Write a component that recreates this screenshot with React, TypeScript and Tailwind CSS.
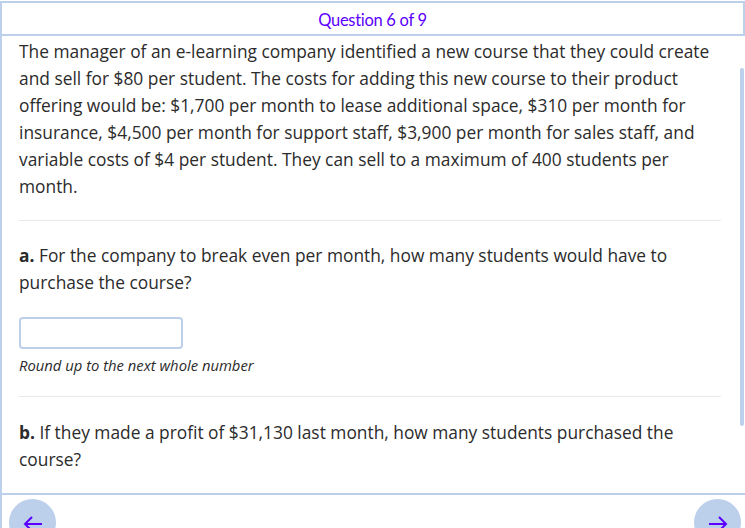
import React from "react";

/* ===================== ARROWS ===================== */
function Arrow({ dir }: { dir: "left" | "right" }) {
  return (
    <svg width="20" height="18" viewBox="0 0 20 18" fill="none" className="mt-[3px]">
      {dir === "left" ? (
        <path d="M19 9H2M9 2L2 9l7 7" stroke="#5b00ff" strokeWidth="2" />
      ) : (
        <path d="M1 9h17M11 2l7 7-7 7" stroke="#5b00ff" strokeWidth="2" />
      )}
    </svg>
  );
}

/* ===================== COMPONENT ===================== */
export default function App() {
  return (
    <div
      className="relative w-[745px] h-[528px] overflow-hidden bg-white text-[#2b2b2b]"
      style={{ fontFamily: '"Open Sans", sans-serif' }}
    >
      {/* HEADER */}
      <div className="mt-px h-[35px] border-y-2 border-x-2 border-[#bcd0ec] flex items-center justify-center pt-[3px]">
        <span
          className="text-[16.5px] tracking-[-0.3px] text-[#5b00ff]"
          style={{ fontFamily: "Lato, sans-serif" }}
        >
          Question 6 of 9
        </span>
      </div>

      {/* BODY */}
      <div className="h-[457px] border-l-2 border-[#bcd0ec] pl-[17px] pt-[2px]">
        <p className="text-[17.35px] leading-[27px] w-[718px] whitespace-nowrap">
          The manager of an e-learning company identified a new course that they could create
          <br />
          and sell for $80 per student. The costs for adding this new course to their product
          <br />
          offering would be: $1,700 per month to lease additional space, $310 per month for
          <br />
          insurance, $4,500 per month for support staff, $3,900 per month for sales staff, and
          <br />
          variable costs of $4 per student. They can sell to a maximum of 400 students per
          <br />
          month.
        </p>

        <div className="mt-[20px] h-px w-[702px] bg-[#e8eaee]" />

        <p className="mt-[21px] text-[17.35px] leading-[27px] whitespace-nowrap">
          <span className="font-bold">a.</span> For the company to break even per month, how
          many students would have to
          <br />
          purchase the course?
        </p>

        <div className="mt-[21px] w-[164px] h-[32px] rounded-[4px] border-2 border-[#bcd0ec]" />

        <p className="mt-[6px] text-[14.8px] leading-[20px] italic">
          Round up to the next whole number
        </p>

        <div className="mt-[21px] h-px w-[702px] bg-[#e8eaee]" />

        <p className="mt-[22px] text-[17.35px] leading-[27px] whitespace-nowrap">
          <span className="font-bold">b.</span> If they made a profit of $31,130 last month,
          how many students purchased the
          <br />
          course?
        </p>
      </div>

      {/* FOOTER */}
      <div className="border-t-2 border-l-2 border-[#bcd0ec] h-[40px] flex justify-between pl-[7px] pr-[4px] pt-[4px]">
        <div className="w-[47px] h-[47px] rounded-full bg-[#bcd0ec] flex items-center justify-center">
          <Arrow dir="left" />
        </div>
        <div className="w-[47px] h-[47px] rounded-full bg-[#bcd0ec] flex items-center justify-center">
          <Arrow dir="right" />
        </div>
      </div>

      {/* SCROLLBAR */}
      <div className="absolute left-[740px] top-[68px] w-[4px] h-[358px] rounded-full bg-[#bcd0ec]" />
    </div>
  );
}
